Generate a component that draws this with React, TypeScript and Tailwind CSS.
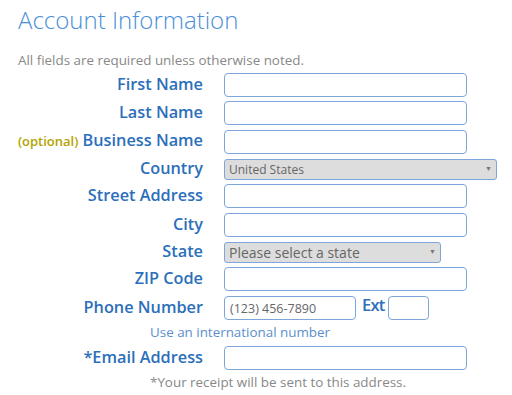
import type { ReactNode } from "react";

const font = { fontFamily: '"Open Sans", "Noto Sans", sans-serif' };

function Row({
  label,
  children,
  className = "mb-[5px]",
}: {
  label: ReactNode;
  children: ReactNode;
  className?: string;
}) {
  return (
    <div className={`flex items-center ${className}`}>
      <label className="w-[204px] shrink-0 pr-[1px] text-right text-[16.3px] font-semibold leading-[20px] text-[#2c6fba] -mt-[3px]">
        {label}
      </label>
      <div className="ml-[20px] flex items-center">{children}</div>
    </div>
  );
}

function TextInput({ w = "w-[243px]", placeholder }: { w?: string; placeholder?: string }) {
  return (
    <input
      type="text"
      placeholder={placeholder}
      className={`${w} h-[24px] rounded-[4px] border border-[#7ea6da] bg-white px-[5px] text-[12.5px] text-[#555] placeholder:text-[#666] focus:outline-none`}
    />
  );
}

function Select({ w, value, size }: { w: string; value: string; size: string }) {
  return (
    <div
      className={`${w} ${size} flex h-[21px] items-center justify-between rounded-[3px] border border-[#7ea6da] bg-[#dddddd] pl-[4px] pr-[4px] text-[#666]`}
    >
      <span>{value}</span>
      <span className="text-[7px] text-[#777]">▼</span>
    </div>
  );
}

export default function App() {
  return (
    <div className="min-h-screen bg-white" style={font}>
      <div className="pl-[18px] pt-[4px]">
        <h1 className="text-[24px] font-light leading-[32px] text-[#4a8fd8]">
          Account Information
        </h1>
        <p className="mt-[16px] text-[13.4px] leading-[16px] text-[#888]">
          All fields are required unless otherwise noted.
        </p>
      </div>

      <form className="mt-[5px]">
        <Row label="First Name" className="mb-[4px]">
          <TextInput />
        </Row>
        <Row label="Last Name">
          <TextInput />
        </Row>
        <Row
          label={
            <>
              <span className="text-[13px] text-[#b3a300]">(optional)</span> Business Name
            </>
          }
        >
          <TextInput />
        </Row>
        <Row label="Country" className="mb-[4px]">
          <Select w="w-[273px]" size="text-[12px]" value="United States" />
        </Row>
        <Row label="Street Address">
          <TextInput />
        </Row>
        <Row label="City">
          <TextInput />
        </Row>
        <Row label="State" className="mb-[4px]">
          <Select w="w-[217px]" size="text-[14px]" value="Please select a state" />
        </Row>
        <Row label="ZIP Code">
          <TextInput />
        </Row>
        <Row label="Phone Number" className="mb-[2px]">
          <TextInput w="w-[132px]" placeholder="(123) 456-7890" />
          <span className="ml-[6px] mr-[4px] -mt-[5px] text-[16.5px] font-semibold tracking-[-0.8px] text-[#2c6fba]">Ext</span>
          <TextInput w="w-[41px]" />
        </Row>
        <p className="ml-[150px] text-[13.4px] leading-[20px] text-[#5b8fcc]">
          Use an international number
        </p>
        <Row label="*Email Address" className="mt-[4px] mb-[2px]">
          <TextInput />
        </Row>
        <p className="ml-[150px] text-[13.4px] leading-[20px] text-[#888]">
          *Your receipt will be sent to this address.
        </p>
      </form>
    </div>
  );
}
